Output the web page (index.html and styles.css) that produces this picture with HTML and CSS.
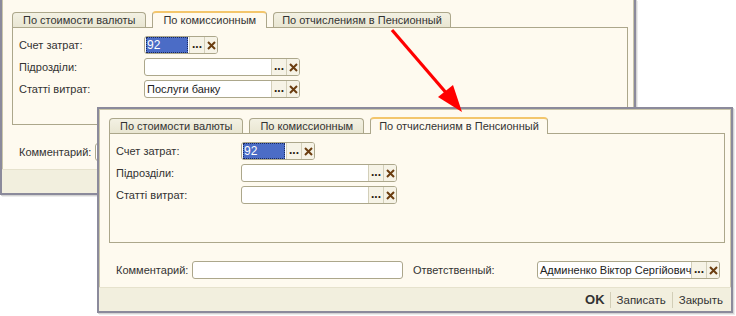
FILE: index.html
```html
<!DOCTYPE html>
<html lang="ru">
<head>
<meta charset="utf-8">
<title>Form</title>
<link rel="stylesheet" href="styles.css">
</head>
<body>
<div class="desk">
  <div class="win win-back">
    <div class="tabs">
      <div class="tab">По стоимости валюты</div>
      <div class="tab active">По комиссионным</div>
      <div class="tab">По отчислениям в Пенсионный</div>
    </div>
    <div class="panel back-panel">
      <div class="row"><span class="lbl">Счет затрат:</span>
        <div class="field short"><span class="val"><span class="sel">92</span></span><span class="btn dots">...</span><span class="btn x"><svg viewBox="0 0 9 9" width="9" height="9"><path d="M1 1L8 8M8 1L1 8"/></svg></span></div>
      </div>
      <div class="row"><span class="lbl">Підрозділи:</span>
        <div class="field long"><span class="val"></span><span class="btn dots">...</span><span class="btn x"><svg viewBox="0 0 9 9" width="9" height="9"><path d="M1 1L8 8M8 1L1 8"/></svg></span></div>
      </div>
      <div class="row"><span class="lbl">Статті витрат:</span>
        <div class="field long"><span class="val">Послуги банку</span><span class="btn dots">...</span><span class="btn x"><svg viewBox="0 0 9 9" width="9" height="9"><path d="M1 1L8 8M8 1L1 8"/></svg></span></div>
      </div>
    </div>
    <div class="bottom">
      <span class="blbl">Комментарий:</span>
      <div class="field comment"></div>
    </div>
    <div class="footer"></div>
  </div>

  <div class="win win-front">
    <div class="tabs">
      <div class="tab">По стоимости валюты</div>
      <div class="tab">По комиссионным</div>
      <div class="tab active">По отчислениям в Пенсионный</div>
    </div>
    <div class="panel front-panel">
      <div class="row"><span class="lbl">Счет затрат:</span>
        <div class="field short"><span class="val"><span class="sel">92</span></span><span class="btn dots">...</span><span class="btn x"><svg viewBox="0 0 9 9" width="9" height="9"><path d="M1 1L8 8M8 1L1 8"/></svg></span></div>
      </div>
      <div class="row"><span class="lbl">Підрозділи:</span>
        <div class="field long"><span class="val"></span><span class="btn dots">...</span><span class="btn x"><svg viewBox="0 0 9 9" width="9" height="9"><path d="M1 1L8 8M8 1L1 8"/></svg></span></div>
      </div>
      <div class="row"><span class="lbl">Статті витрат:</span>
        <div class="field long"><span class="val"></span><span class="btn dots">...</span><span class="btn x"><svg viewBox="0 0 9 9" width="9" height="9"><path d="M1 1L8 8M8 1L1 8"/></svg></span></div>
      </div>
    </div>
    <div class="bottom">
      <span class="blbl">Комментарий:</span>
      <div class="field comment"></div>
      <span class="rlbl">Ответственный:</span>
      <div class="field resp"><span class="val">Админенко Віктор Сергійович</span><span class="btn dots">...</span><span class="btn x"><svg viewBox="0 0 9 9" width="9" height="9"><path d="M1 1L8 8M8 1L1 8"/></svg></span></div>
    </div>
    <div class="footer">
      <span class="fbtn ok">OK</span>
      <span class="sep"></span>
      <span class="fbtn">Записать</span>
      <span class="sep"></span>
      <span class="fbtn">Закрыть</span>
    </div>
  </div>

  <svg class="arrow" viewBox="0 0 736 316" width="736" height="316">
    <line x1="392" y1="30" x2="448" y2="95" stroke="#ff0000" stroke-width="3.2"/>
    <polygon points="462,112 438,97 453,85" fill="#ff0000"/>
  </svg>
</div>
</body>
</html>
```

FILE: styles.css
```css
* { box-sizing: border-box; }
html, body { margin: 0; padding: 0; background: #ffffff; }
body {
  font-family: "Liberation Sans", Arial, sans-serif;
  font-size: 11px;
  color: #333333;
}
.desk { position: relative; width: 736px; height: 316px; overflow: hidden; }

.win {
  position: absolute;
  width: 636px;
  background: #fefaef;
  border: 2px solid #8b8a9b;
  box-shadow: inset 0 0 0 1px #c9c5aa, 1px 1px 0 #d4d4d4, 2px 2px 0 #ececec;
  display: flex;
  flex-direction: column;
  padding-top: 8px;
}
.win-back { left: 0; top: -1px; border-top: 0; padding-top: 12px; }
.win-front { left: 97px; top: 107px; }

.tabs {
  display: flex;
  align-items: flex-end;
  gap: 6px;
  height: 16px;
  margin-left: 10px;
  position: relative;
  z-index: 1;
}
.tab {
  height: 15px;
  line-height: 14px;
  padding: 0 10px;
  background: linear-gradient(#f3f1e3, #e9e6d2);
  border: 1px solid #aca78b;
  border-bottom: 0;
  border-radius: 4px 4px 0 0;
  white-space: nowrap;
}
.tab:last-child { padding: 0 8px; }
.tab.active {
  height: 17px;
  line-height: 14px;
  background: #fefaef;
  border-top: 2px solid #f3c66c;
  margin-bottom: -1px;
}

.panel {
  margin: 0 6px 0 10px;
  border: 1px solid #aca78b;
  padding: 8px 6px 0;
  display: flex;
  flex-direction: column;
  gap: 4px;
}
.back-panel { height: 98px; }
.front-panel { height: 110px; }

.row { display: flex; align-items: center; height: 18px; }
.lbl { width: 125px; flex: none; }

.field {
  height: 18px;
  border: 1px solid #aca78b;
  border-radius: 3px;
  background: #ffffff;
  display: flex;
  overflow: hidden;
  flex: none;
}
.field.short { width: 74px; }
.field.long { width: 156px; }
.field.comment { width: 211px; }
.field.resp { width: 183px; }

.val {
  flex: 1;
  padding: 0 1px 0 2px;
  line-height: 16px;
  color: #222;
  white-space: nowrap;
  overflow: hidden;
  display: flex;
}
.sel {
  flex: 1;
  margin: 0 0 0 -1px;
  padding-left: 1px;
  background: #4b6cc6;
  color: #ffffff;
  outline: 1px dotted #1a2a60;
  outline-offset: -1px;
  line-height: 16px;
  font-size: 12px;
}
.btn {
  flex: none;
  border-left: 1px solid #d3cfb9;
  background: #f6f3e6;
  display: flex;
  align-items: center;
  justify-content: center;
}
.dots { width: 15px; line-height: 16px; font-size: 12px; font-weight: bold; color: #2a2010; align-items: flex-end; padding-bottom: 1px; }
.x { width: 13px; }
.x svg { display: block; }
.x path { stroke: #6b3d10; stroke-width: 2; fill: none; }

.bottom {
  display: flex;
  align-items: center;
  height: 18px;
  margin-top: 18px;
  padding-left: 17px;
}
.blbl { width: 76px; flex: none; }
.rlbl { width: 124px; margin-left: 10px; flex: none; }

.footer {
  margin-top: 8px;
  height: 24px;
  background: #f2efde;
  border-top: 1px solid #e6e2cd;
  display: flex;
  align-items: center;
  justify-content: flex-end;
  padding-right: 2px;
}
.fbtn { padding: 0 6px; font-size: 11.5px; color: #333; }
.fbtn.ok { font-weight: bold; font-size: 13px; color: #333; padding: 0 5px; }
.sep { width: 1px; height: 16px; background: #d2ceb7; }

.arrow { position: absolute; left: 0; top: 0; z-index: 10; pointer-events: none; }
```
